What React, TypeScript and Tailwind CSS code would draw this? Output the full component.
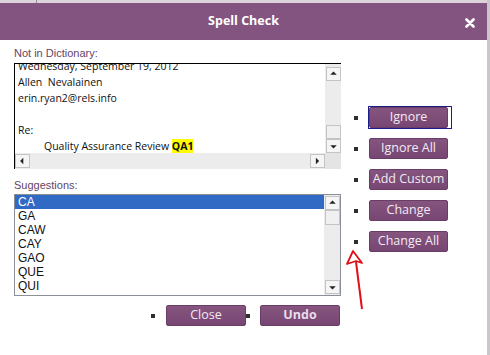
import React from "react";

const font = { fontFamily: '"Liberation Sans", Arial, sans-serif' };
const segoe = { fontFamily: '"Open Sans", "DejaVu Sans", sans-serif' };

function ArrowBtn({ dir }: { dir: "up" | "down" | "left" | "right" }) {
  const paths: Record<string, string> = {
    up: "M4 7 L8 3 L12 7 Z",
    down: "M4 5 L8 9 L12 5 Z",
    left: "M9 3 L5 7 L9 11 Z",
    right: "M6 3 L10 7 L6 11 Z",
  };
  return (
    <div className="w-[15px] h-[14px] bg-[#f5f5f5] border border-[#c4c4c4] flex items-center justify-center shrink-0">
      <svg width="16" height="12" viewBox="0 0 16 12">
        <path d={paths[dir]} fill="#222" transform={dir === "left" || dir === "right" ? "translate(0,-1)" : ""} />
      </svg>
    </div>
  );
}

function Btn({ label, focus }: { label: string; focus?: boolean }) {
  return (
    <div className="relative">
      {focus && (
        <div className="absolute left-[-1px] top-[-1px] right-[-4px] bottom-[-1px] border border-[#1c1c8a]" />
      )}
      <div
        className="w-[79px] h-[21px] rounded-[2px] bg-gradient-to-b from-[#85557f] to-[#774673] border border-[#6a3d67] text-[#f3eaf3] text-[12.5px] flex items-center justify-center"
        style={segoe}
      >
        {label}
      </div>
    </div>
  );
}

function Bullet() {
  return <div className="w-[4px] h-[4px] bg-[#2e2e2e] shrink-0" />;
}

export default function App() {
  const suggestions = ["CA", "GA", "CAW", "CAY", "GAO", "QUE", "QUI"];
  const buttons = ["Ignore", "Ignore All", "Add Custom", "Change", "Change All"];
  return (
    <div className="relative w-[490px] h-[355px] bg-white overflow-hidden" style={font}>
      <div className="flex flex-col w-[487px] h-full">
        {/* top strip */}
        <div className="h-[3px] bg-[#dcd3db] relative">
          <div className="absolute left-[36px] top-0 w-[1px] h-[3px] bg-[#9c8a9a]" />
        </div>
        {/* title bar */}
        <div className="h-[37px] bg-[#845480] relative flex items-center justify-center">
          <span className="text-white font-bold text-[12.5px]" style={segoe}>
            Spell Check
          </span>
          <svg className="absolute left-[465px] top-[15px]" width="10" height="10" viewBox="0 0 10 10">
            <path d="M1.5 1.5 L8.5 8.5 M8.5 1.5 L1.5 8.5" stroke="white" strokeWidth="2.6" strokeLinecap="round" />
          </svg>
        </div>
        {/* body */}
        <div className="flex flex-1 pl-[14px]">
          {/* left column */}
          <div className="w-[327px] flex flex-col">
            <div className="pt-[6px] text-[11px] leading-[14px] text-[#654565]">Not in Dictionary:</div>
            {/* text area */}
            <div className="mt-[3px] h-[106px] flex flex-col border-t border-l border-black">
              <div className="flex h-[89px]">
                <div className="flex-1 overflow-hidden">
                  <div className="mt-[-6px] pl-[3px] text-[10.5px] leading-[16px] text-[#111]" style={segoe}>
                    <div>Wednesday, September 19, 2012</div>
                    <div>Allen&nbsp; Nevalainen</div>
                    <div>erin.ryan2@rels.info</div>
                    <div>&nbsp;</div>
                    <div>Re:</div>
                    <div className="pl-[26px]">
                      Quality Assurance Review{" "}
                      <span className="bg-[#ffff00] font-bold border-b border-dotted border-[#6a8a00]">QA1</span>
                    </div>
                  </div>
                </div>
                <div className="w-[16px] bg-[#ececec] flex flex-col items-center pt-[3px]">
                  <ArrowBtn dir="up" />
                  <div className="flex-1" />
                  <div className="w-[15px] h-[14px] bg-[#f0f0f0] border border-[#c4c4c4]" />
                  <ArrowBtn dir="down" />
                </div>
              </div>
              <div className="flex h-[16px] bg-[#ececec]">
                <div className="flex-1 flex items-center">
                  <ArrowBtn dir="left" />
                  <div className="flex-1" />
                  <ArrowBtn dir="right" />
                </div>
                <div className="w-[16px] bg-[#e4e4e4]" />
              </div>
            </div>
            <div className="mt-[9px] text-[11px] leading-[14px] text-[#654565]">Suggestions:</div>
            {/* listbox */}
            <div className="mt-[2px] h-[102px] border border-[#8a8f98] flex">
              <div className="flex-1 text-[12px] leading-[14px] text-[#111]">
                {suggestions.map((s, i) => (
                  <div key={s} className={`pl-[3px] h-[14px] ${i === 0 ? "bg-[#316ac5] text-white" : ""}`}>
                    {s}
                  </div>
                ))}
              </div>
              <div className="w-[16px] bg-[#ececec] flex flex-col items-center pt-[1px] pb-[1px]">
                <ArrowBtn dir="up" />
                <div className="w-[15px] h-[15px] bg-[#f0f0f0] border border-[#c4c4c4]" />
                <div className="flex-1" />
                <ArrowBtn dir="down" />
              </div>
            </div>
            {/* bottom buttons */}
            <div className="mt-[9px] flex justify-end items-center pr-[1px]">
              <Bullet />
              <div
                className="ml-[11px] w-[80px] h-[21px] rounded-[2px] bg-gradient-to-b from-[#85557f] to-[#774673] border border-[#6a3d67] text-[#f3eaf3] text-[12.5px] flex items-center justify-center"
                style={segoe}
              >
                Close
              </div>
              <Bullet />
              <div
                className="ml-[10px] w-[80px] h-[21px] rounded-[2px] bg-gradient-to-b from-[#85557f] to-[#774673] border border-[#6a3d67] text-[#eadcea] text-[12.5px] font-bold flex items-center justify-center"
                style={segoe}
              >
                Undo
              </div>
            </div>
          </div>
          {/* right column */}
          <div className="ml-[13px] pt-[67px] flex flex-col gap-[10px]">
            {buttons.map((b, i) => (
              <div key={b} className="flex items-center">
                <Bullet />
                <div className="ml-[11px]">
                  <Btn label={b} focus={i === 0} />
                </div>
              </div>
            ))}
          </div>
        </div>
      </div>
      {/* right gray border */}
      <div className="absolute right-0 top-0 w-[3px] h-full bg-[#cbc6cb]" />
      {/* red annotation arrow */}
      <svg className="absolute left-0 top-0 pointer-events-none" width="490" height="355" viewBox="0 0 490 355">
        <path d="M362 309 L356 262" stroke="#e0101a" strokeWidth="2" fill="none" />
        <path d="M353 251 L347 264 L356 261 L362 263 Z" stroke="#e0101a" strokeWidth="1.8" fill="none" strokeLinejoin="round" />
      </svg>
    </div>
  );
}
